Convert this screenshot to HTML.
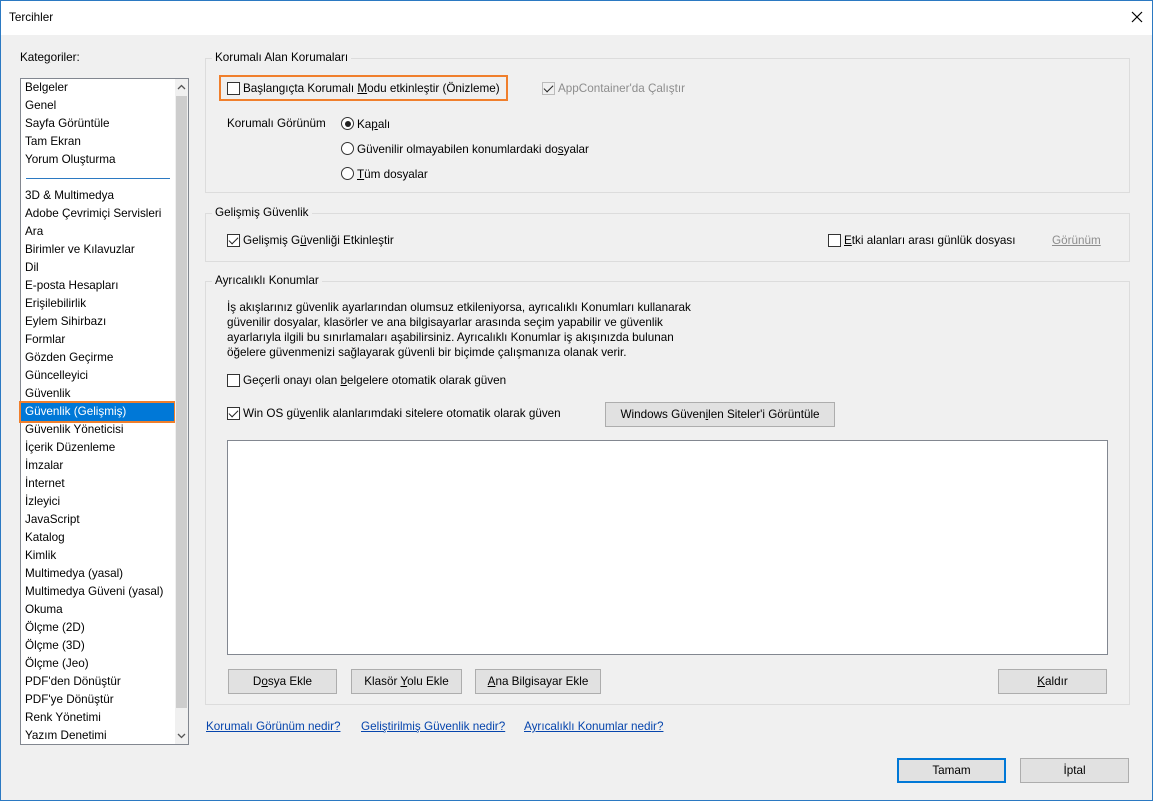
<!DOCTYPE html>
<html><head><meta charset="utf-8"><style>
*{box-sizing:border-box}
body{margin:0;width:1153px;height:805px;overflow:hidden;background:#fff;font-family:"Liberation Sans",sans-serif;font-size:11.7px;color:#000;position:relative}
.a{position:absolute;white-space:nowrap}
#dlg{position:absolute;left:0;top:0;width:1153px;height:801px;background:#f0f0f0;border:1px solid #2b79c2}
#title{position:absolute;left:0;top:0;width:1151px;height:34px;background:#fff}
.fs{position:absolute;border:1px solid #dcdcdc}
.lg{position:absolute;background:#f0f0f0;padding:0 3px;top:-8px;left:6px}
.cb{position:absolute;width:13px;height:13px;border:1px solid #333;background:#fff}
.cb.c::after{content:"";position:absolute;left:3px;top:0px;width:4px;height:8px;border:solid #222;border-width:0 1.5px 1.5px 0;transform:rotate(45deg)}
.rb{position:absolute;width:13px;height:13px;border:1px solid #333;border-radius:50%;background:#fff}
.rb.c::after{content:"";position:absolute;left:2.5px;top:2.5px;width:6px;height:6px;border-radius:50%;background:#222}
.btn{position:absolute;height:25px;background:#e1e1e1;border:1px solid #adadad;text-align:center;line-height:23px}
.lnk{position:absolute;color:#0645ad;text-decoration:underline;white-space:nowrap}
#list{position:absolute;left:19px;top:77px;width:169px;height:667px;background:#fff;border:1px solid #828790}
#list div{height:18px;line-height:18px;padding-left:4px;white-space:nowrap}
u{text-decoration:underline}
</style></head><body>
<div id="dlg">
<div id="title"><span class="a" style="left:8px;top:10px">Tercihler</span>
<svg class="a" style="left:1130px;top:10px" width="12" height="12"><path d="M1 1L11 11M11 1L1 11" stroke="#000" stroke-width="1.2"/></svg></div>
<span class="a" style="left:19px;top:50px">Kate<u>g</u>oriler:</span>
<div id="list">
<div>Belgeler</div><div>Genel</div><div>Sayfa Görüntüle</div><div>Tam Ekran</div><div>Yorum Oluşturma</div>
<div style="height:18px;position:relative"><span style="position:absolute;left:5px;right:18px;top:9px;border-top:1px solid #2b79c2"></span></div>
<div>3D &amp; Multimedya</div><div>Adobe Çevrimiçi Servisleri</div><div>Ara</div><div>Birimler ve Kılavuzlar</div><div>Dil</div><div>E-posta Hesapları</div><div>Erişilebilirlik</div><div>Eylem Sihirbazı</div><div>Formlar</div><div>Gözden Geçirme</div><div>Güncelleyici</div><div>Güvenlik</div>
<div style="background:#0078d7;color:#fff;outline:2px solid #f07f2c;width:153px">Güvenlik (Gelişmiş)</div>
<div>Güvenlik Yöneticisi</div><div>İçerik Düzenleme</div><div>İmzalar</div><div>İnternet</div><div>İzleyici</div><div>JavaScript</div><div>Katalog</div><div>Kimlik</div><div>Multimedya (yasal)</div><div>Multimedya Güveni (yasal)</div><div>Okuma</div><div>Ölçme (2D)</div><div>Ölçme (3D)</div><div>Ölçme (Jeo)</div><div>PDF'den Dönüştür</div><div>PDF'ye Dönüştür</div><div>Renk Yönetimi</div><div>Yazım Denetimi</div>
<div style="position:absolute;right:0;top:0;width:13px;height:665px;background:#f0f0f0;padding:0"></div>
<div style="position:absolute;right:1px;top:17px;width:11px;height:612px;background:#cdcdcd;padding:0"></div>
<svg class="a" style="right:2px;top:5px" width="9" height="6"><path d="M1 5L4.5 1.5L8 5" stroke="#555" fill="none" stroke-width="1.3"/></svg>
<svg class="a" style="right:2px;bottom:5px" width="9" height="6"><path d="M1 1L4.5 4.5L8 1" stroke="#555" fill="none" stroke-width="1.3"/></svg>
</div>

<div class="fs" style="left:204px;top:57px;width:925px;height:135px"><span class="lg">Korumalı Alan Korumaları</span></div>
<div class="a" style="left:218px;top:74px;width:289px;height:26px;border:2px solid #f07f2c"></div>
<div class="cb" style="left:226px;top:81px"></div><span class="a" style="left:242px;top:81px">Başlangıçta Korumalı <u>M</u>odu etkinleştir (Önizleme)</span>
<div class="cb c" style="left:541px;top:81px;border-color:#bbb;background:#f0f0f0"></div><span class="a" style="left:557px;top:81px;color:#8d8d8d">AppContainer'da Çalıştır</span>
<span class="a" style="left:226px;top:116px">Korumalı Görünüm</span>
<div class="rb c" style="left:340px;top:116px"></div><span class="a" style="left:356px;top:117px">Ka<u>p</u>alı</span>
<div class="rb" style="left:340px;top:141px"></div><span class="a" style="left:356px;top:142px">Güvenilir olmayabilen konumlardaki do<u>s</u>yalar</span>
<div class="rb" style="left:340px;top:166px"></div><span class="a" style="left:356px;top:167px"><u>T</u>üm dosyalar</span>

<div class="fs" style="left:204px;top:212px;width:925px;height:49px"><span class="lg">Gelişmiş Güvenlik</span></div>
<div class="cb c" style="left:226px;top:233px"></div><span class="a" style="left:242px;top:233px">Gelişmiş G<u>ü</u>venliği Etkinleştir</span>
<div class="cb" style="left:827px;top:233px"></div><span class="a" style="left:843px;top:233px"><u>E</u>tki alanları arası günlük dosyası</span>
<span class="a" style="left:1051px;top:233px;color:#8d8d8d;text-decoration:underline">Görünüm</span>

<div class="fs" style="left:204px;top:280px;width:925px;height:424px"><span class="lg">Ayrıcalıklı Konumlar</span></div>
<div class="a" style="left:226px;top:299px;line-height:15px;white-space:normal;width:480px">İş akışlarınız güvenlik ayarlarından olumsuz etkileniyorsa, ayrıcalıklı Konumları kullanarak<br>güvenilir dosyalar, klasörler ve ana bilgisayarlar arasında seçim yapabilir ve güvenlik<br>ayarlarıyla ilgili bu sınırlamaları aşabilirsiniz. Ayrıcalıklı Konumlar iş akışınızda bulunan<br>öğelere güvenmenizi sağlayarak güvenli bir biçimde çalışmanıza olanak verir.</div>
<div class="cb" style="left:226px;top:373px"></div><span class="a" style="left:242px;top:373px">Geçerli onayı olan <u>b</u>elgelere otomatik olarak güven</span>
<div class="cb c" style="left:226px;top:406px"></div><span class="a" style="left:242px;top:406px">Win OS gü<u>v</u>enlik alanlarımdaki sitelere otomatik olarak güven</span>
<div class="btn" style="left:604px;top:401px;width:230px">Windows Güven<u>i</u>len Siteler'i Görüntüle</div>
<div class="a" style="left:226px;top:439px;width:881px;height:215px;background:#fff;border:1px solid #828790"></div>
<div class="btn" style="left:227px;top:668px;width:109px">D<u>o</u>sya Ekle</div>
<div class="btn" style="left:350px;top:668px;width:111px">Klasör <u>Y</u>olu Ekle</div>
<div class="btn" style="left:474px;top:668px;width:126px"><u>A</u>na Bilgisayar Ekle</div>
<div class="btn" style="left:997px;top:668px;width:109px"><u>K</u>aldır</div>

<span class="lnk" style="left:205px;top:719px">Korumalı Görünüm nedir?</span>
<span class="lnk" style="left:360px;top:719px">Geliştirilmiş Güvenlik nedir?</span>
<span class="lnk" style="left:523px;top:719px">Ayrıcalıklı Konumlar nedir?</span>

<div class="btn" style="left:896px;top:757px;width:109px;border:2px solid #0078d7;line-height:21px">Tamam</div>
<div class="btn" style="left:1019px;top:757px;width:109px">İptal</div>
</div>
</body></html>
